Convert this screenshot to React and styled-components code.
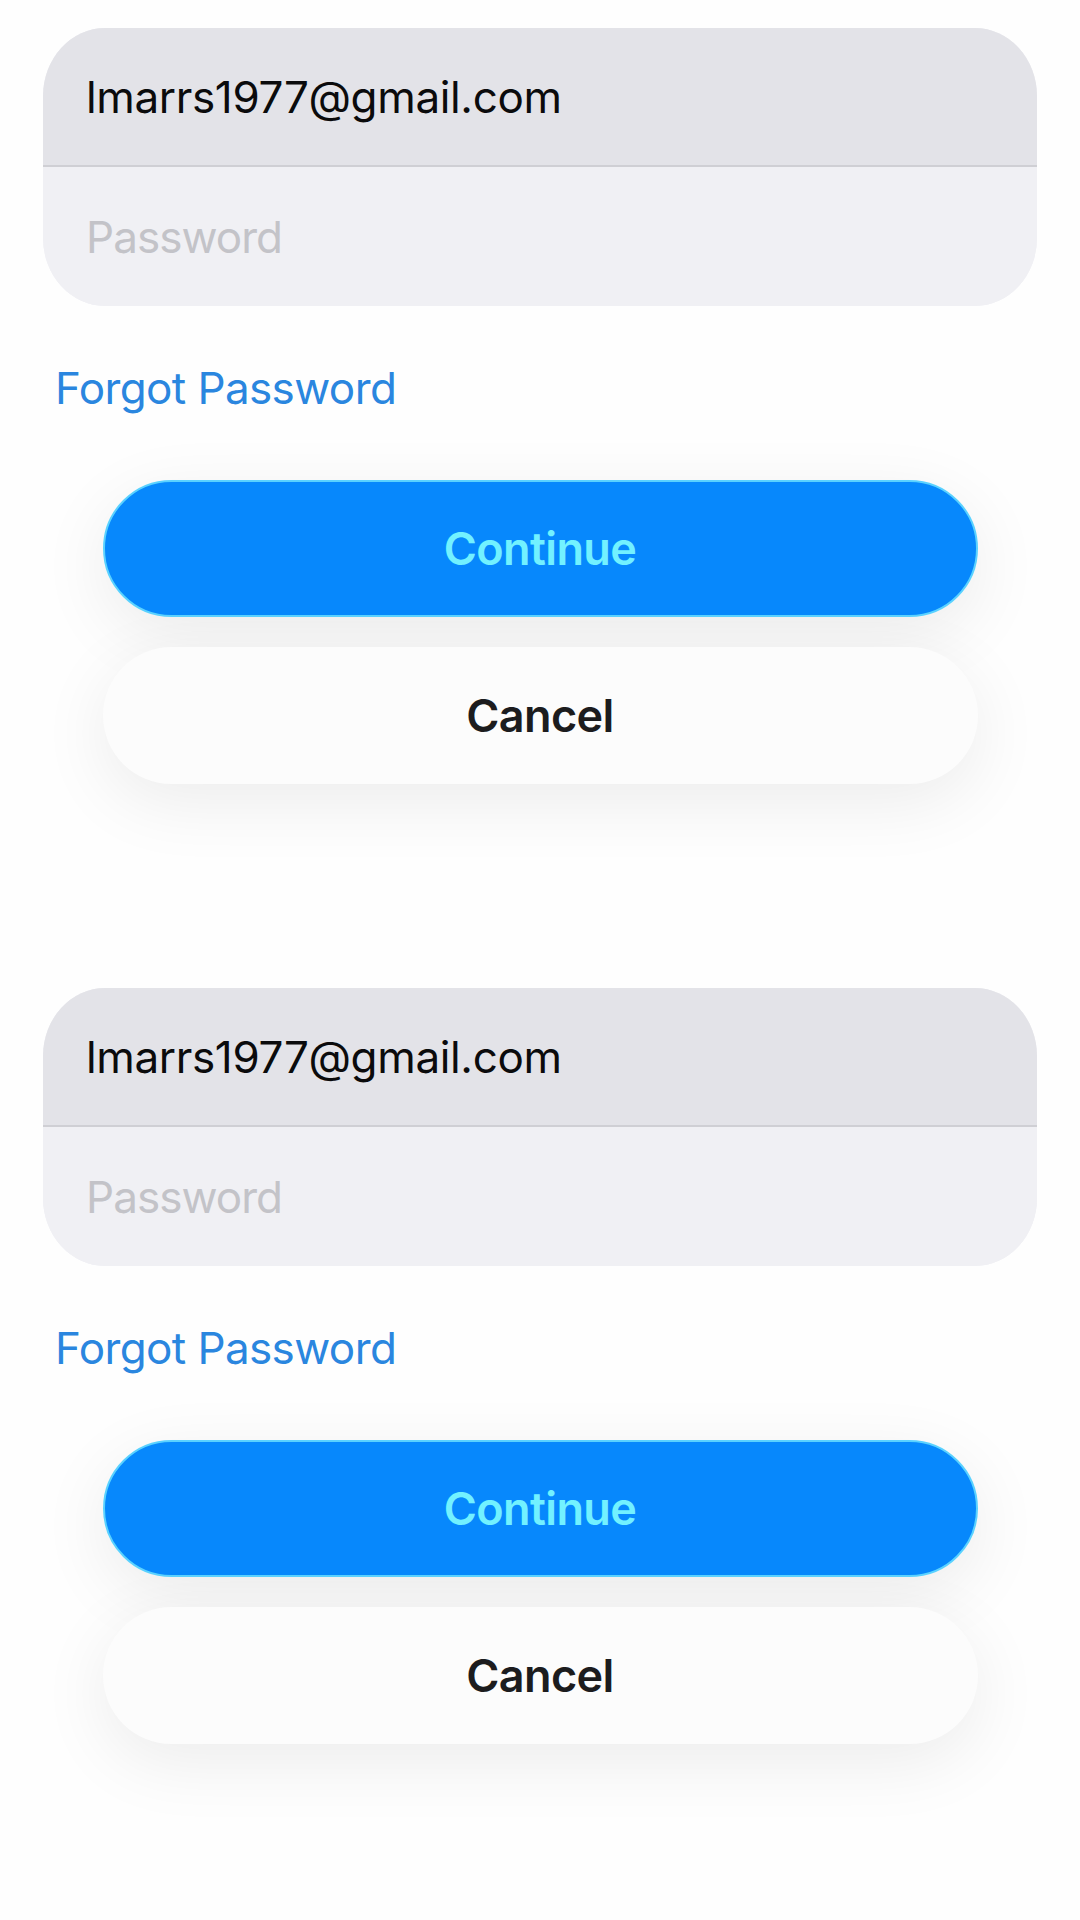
import React from "react";
import styled, { createGlobalStyle } from "styled-components";

const GlobalStyle = createGlobalStyle`
  html, body {
    margin: 0;
    padding: 0;
    background: #fefefe;
  }
  * {
    box-sizing: border-box;
  }
`;

const SignInSheet = ({ email }) => {
  return (
    <Sheet>
      <FieldGroup>
        <FieldRow top>
          <Field type="email" value={email} readOnly />
        </FieldRow>
        <FieldRow>
          <Field type="password" placeholder="Password" readOnly />
        </FieldRow>
      </FieldGroup>

      <ForgotLink href="#">Forgot Password</ForgotLink>

      <Actions>
        <ActionButton primary>Continue</ActionButton>
        <ActionButton>Cancel</ActionButton>
      </Actions>
    </Sheet>
  );
};

export default function App() {
  return (
    <>
      <GlobalStyle />
      <Page>
        <SignInSheet email="lmarrs1977@gmail.com" />
        <SignInSheet email="lmarrs1977@gmail.com" />
      </Page>
    </>
  );
}

const Page = styled.div`
  width: 1080px;
  display: flex;
  flex-direction: column;
  font-family: Inter, "Noto Sans", sans-serif;
`;

const Sheet = styled.section`
  height: 960px;
  padding: 28px 43px 0;
  display: flex;
  flex-direction: column;
`;

const FieldGroup = styled.div`
  width: 994px;
  border-radius: 62px / 68px;
  overflow: hidden;
  background: #f0f0f4;
  display: flex;
  flex-direction: column;
`;

const FieldRow = styled.div`
  height: 139px;
  display: flex;
  align-items: center;
  padding: 0 43px;
  background: ${(p) => (p.top ? "#e3e3e8" : "#f0f0f4")};
  border-bottom: ${(p) => (p.top ? "2px solid #cfcfd4" : "none")};
`;

const Field = styled.input`
  width: 100%;
  border: none;
  outline: none;
  background: transparent;
  padding: 0;
  font-family: Inter, "Noto Sans", sans-serif;
  font-size: 44px;
  letter-spacing: -0.35px;
  color: #0b0b0c;

  &::placeholder {
    color: #c3c3c8;
    letter-spacing: -0.95px;
  }
`;

const ForgotLink = styled.a`
  margin: 54px 0 0 12px;
  align-self: flex-start;
  font-size: 44px;
  line-height: 56px;
  letter-spacing: -0.6px;
  color: #2a86df;
  text-decoration: none;
`;

const Actions = styled.div`
  margin-top: 64px;
  display: flex;
  flex-direction: column;
  align-items: center;
  gap: 30px;
`;

const ActionButton = styled.button`
  width: 875px;
  height: 137px;
  border-radius: 69px;
  border: ${(p) => (p.primary ? "2px solid #5ad2ff" : "none")};
  background: ${(p) => (p.primary ? "#0788fc" : "#fcfcfc")};
  color: ${(p) => (p.primary ? "#72f1ff" : "#1c1c1e")};
  font-family: Inter, "Noto Sans", sans-serif;
  font-size: 45px;
  font-weight: 600;
  letter-spacing: -0.6px;
  box-shadow: 0 18px 70px rgba(0, 0, 0, 0.075);
  cursor: pointer;
`;
